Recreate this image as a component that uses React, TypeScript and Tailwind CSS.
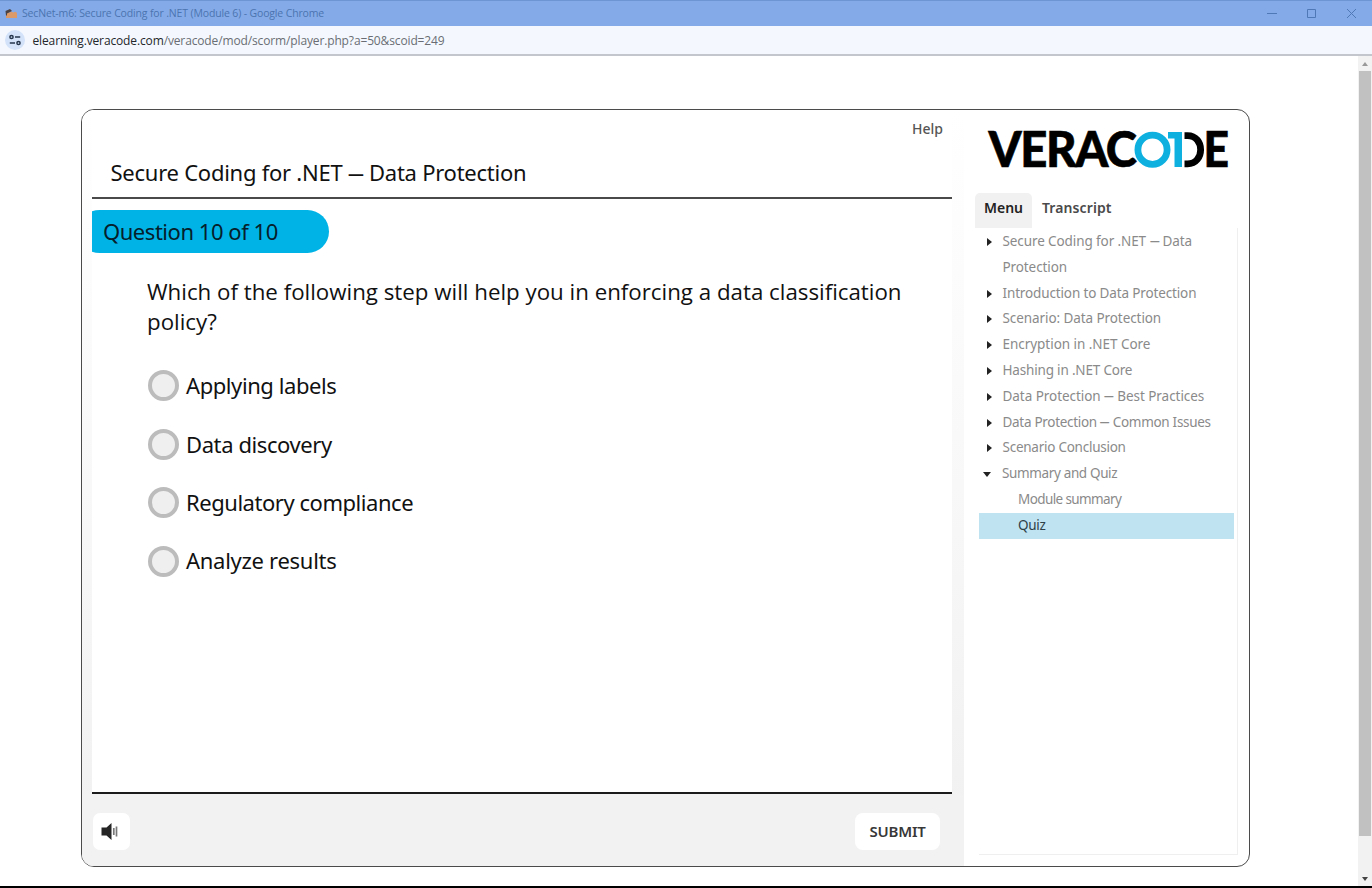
import { Fragment } from "react";

const answers = [
  { label: "Applying labels", cls: "mt-[33px] tracking-[-0.42px]" },
  { label: "Data discovery", cls: "mt-[27px] tracking-[-0.4px]" },
  { label: "Regulatory compliance", cls: "mt-[26.5px] tracking-[-0.46px]" },
  { label: "Analyze results", cls: "mt-[27px] tracking-[-0.28px]" },
];

const topics = [
  { label: "Secure Coding for .NET — Data Protection", cls: "tracking-[-0.1px]" },
  { label: "Introduction to Data Protection", cls: "tracking-[-0.14px]" },
  { label: "Scenario: Data Protection", cls: "tracking-[-0.08px]" },
  { label: "Encryption in .NET Core", cls: "tracking-[-0.04px]" },
  { label: "Hashing in .NET Core", cls: "tracking-[-0.18px]" },
  { label: "Data Protection — Best Practices", cls: "tracking-[-0.05px]" },
  { label: "Data Protection — Common Issues", cls: "tracking-[-0.3px]" },
  { label: "Scenario Conclusion", cls: "tracking-[-0.25px]" },
];

function Dashed({ text }: { text: string }) {
  return (
    <>
      {text.split("—").map((part, i) => (
        <Fragment key={i}>
          {i > 0 && <span className="-mx-[0.14em] inline-block scale-x-[.72] leading-none">—</span>}
          {part}
        </Fragment>
      ))}
    </>
  );
}

function Logo() {
  return (
    <svg
      className="ml-[25px] mt-[21px] block h-[38px] w-[240px] overflow-visible"
      viewBox="0 0 240 38"
      role="img"
      aria-label="Veracode"
    >
      <g
        fontFamily="Lato, 'Liberation Sans', sans-serif"
        fontWeight="900"
        fontSize="48.5"
        fill="#000"
        stroke="#000"
        strokeWidth="0.6"
      >
        <text x="-0.5" y="36" textLength="147" lengthAdjust="spacingAndGlyphs" letterSpacing="-1.5">
          VERAC
        </text>
        <text x="214.500" y="36" textLength="25.5" lengthAdjust="spacingAndGlyphs">E</text>
      </g>
      <circle cx="163.500" cy="18.700" r="14.600" fill="none" stroke="#0eb0e0" strokeWidth="6.800" />
      <path d="M179 1h14v35h-7.500v-28.500h-6.500z" fill="#0eb0e0" />
      <path d="M195.500 4.600h3c17.500 0 17.500 28.200 0 28.200h-3" fill="none" stroke="#000" strokeWidth="6.800" />
    </svg>
  );
}

export default function App() {
  return (
    <div className="flex h-[888px] w-[1372px] flex-col overflow-hidden bg-white font-['Noto_Sans',sans-serif]">
      <header className="flex h-[26px] shrink-0 items-center border-t border-[#6d94d3] bg-[#84abe8] font-['Open_Sans',sans-serif] text-[#4b74b0]">
        <svg className="ml-[5px] h-3 w-3" viewBox="0 0 12 12">
          <path d="M1 6c0-3 4-3 4 0v4H1zM4.500 6c0-3 4-3 4 0v4h-4zM8 6c0-3 4-3 4 0v4H8z" fill="#dc9a68" />
          <path d="M.5 3L5 1l2 2-5 2.500v2H1z" fill="#4a4243" />
        </svg>
        <span className="ml-[5px] whitespace-nowrap text-[10.5px] tracking-[-0.15px]">
          SecNet-m6: Secure Coding for .NET (Module 6) - Google Chrome
        </span>
        <svg className="mb-[1px] ml-auto mr-[15px] h-3 w-[92px]" viewBox="0 0 92 12" fill="none" stroke="#4f78b7" strokeWidth="1">
          <path d="M2 6.500h10M42.500 2.500h8v8h-8zM82 2l9 9M91 2l-9 9" />
        </svg>
      </header>

      <div className="flex h-[30px] shrink-0 items-center border-b-2 border-[#c3c6cc] bg-[#f4f8fe]">
        <span className="ml-[5px] flex h-5 w-5 items-center justify-center rounded-full bg-[#d3e2f9]">
          <svg className="h-3 w-3" viewBox="0 0 12 12" fill="none" stroke="#25364c" strokeWidth="1.5">
            <circle cx="2.500" cy="3" r="1.600" />
            <path d="M6 3h5.200M.8 9h5.200" />
            <circle cx="9.500" cy="9" r="1.600" />
          </svg>
        </span>
        <span className="ml-[7.5px] mt-px whitespace-nowrap font-['Open_Sans',sans-serif] text-[12px] tracking-[-0.134px] text-[#6a6e74]">
          <span className="text-[#24272b]">elearning.veracode.com</span>
          /veracode/mod/scorm/player.php?a=50&amp;scoid=249
        </span>
      </div>

      <div className="flex min-h-0 flex-1">
        <main className="min-w-0 flex-1 pl-[81px] pt-[53px]">
          <div className="flex h-[758px] w-[1169px] overflow-hidden rounded-[13px] border border-[#4b4b4b] bg-white">
            <section className="flex w-[882px] shrink-0 flex-col bg-linear-to-b from-white via-[#f8f8f8] to-[#f0f0f0] pl-[10px]">
              <div className="flex h-[684px] w-[860px] flex-col overflow-hidden bg-white">
                <div className="flex h-[37px] shrink-0 items-center justify-end pr-[9px] text-[14px] font-medium text-[#555]">
                  Help
                </div>
                <h1 className="flex h-[50px] shrink-0 items-center pl-[18.5px] text-[22px] text-[#111]">
                  <span className="whitespace-nowrap tracking-[-0.25px]">
                    <Dashed text="Secure Coding for .NET — Data Protection" />
                  </span>
                </h1>
                <div className="h-[2px] shrink-0 bg-[#4a4a4a]" />
                <div className="-ml-[14px] mt-[11px] flex h-[43px] w-[251px] shrink-0 items-center rounded-full bg-[#00b3e6] pl-[25px] text-[22px] tracking-[-0.46px] text-[#06202b]">
                  Question 10 of 10
                </div>
                <p className="ml-[55px] mt-[24px] whitespace-nowrap font-['Open_Sans',sans-serif] text-[22.3px] leading-[30px] text-[#111]">
                  Which of the following step will help you in enforcing a data classification
                  <br />
                  policy?
                </p>
                <div className="ml-[56px] text-[22px] leading-[32px] text-[#111]">
                  {answers.map((a) => (
                    <label key={a.label} className={`flex h-[31.6px] items-center gap-[7px] ${a.cls}`}>
                      <span className="h-[31px] w-[31px] shrink-0 rounded-full border-4 border-[#bcbcbc] bg-[#efefef]" />
                      <span className="-mt-[1.5px]">{a.label}</span>
                    </label>
                  ))}
                </div>
                <div className="mt-auto h-[2px] shrink-0 bg-[#1b1b1b]" />
              </div>
              <div className="-ml-[10px] flex flex-1 items-center justify-between bg-[#f2f2f2] pl-[11px] pr-[24px] pt-[2px]">
                <button className="flex h-[37px] w-[37px] items-center justify-center rounded-[7px] bg-white">
                  <svg className="-ml-[4px] h-[17px] w-[17px]" viewBox="0 0 17 17">
                    <path d="M.5 4.500h5l5-4.500v17l-5-4.500h-5z" fill="#252525" />
                    <path d="M12.800 5v7M15.500 3.500v10" stroke="#777" strokeWidth="1.700" />
                  </svg>
                </button>
                <button className="flex h-[37px] w-[85px] items-center justify-center rounded-[8px] bg-white text-[15px] font-semibold tracking-[-0.2px] text-[#383838]">
                  SUBMIT
                </button>
              </div>
            </section>

            <aside className="flex flex-1 flex-col">
              <Logo />
              <nav className="ml-[11px] mt-[24px] flex h-[35px] text-[14px] font-semibold text-[#4a4a4a]">
                <span className="flex w-[57px] items-center justify-center rounded-t-[5px] bg-[#f1f1f1] pb-[6px] text-[#222]">
                  Menu
                </span>
                <span className="ml-[10px] flex items-center pb-[6px] tracking-[0.1px]">Transcript</span>
              </nav>
              <ul className="mb-[11px] ml-[15px] mr-[11px] flex-1 border-b border-r border-[#efefef] pr-[3px] pt-[1px] text-[13.5px] leading-[25.8px] text-[#8a8a8a]">
                {topics.map((t) => (
                  <li key={t.label} className="flex">
                    <span className="ml-[7.5px] mt-[9px] h-0 w-0 shrink-0 border-y-4 border-l-[5px] border-y-transparent border-l-[#222]" />
                    <span className={`ml-[11px] w-[212px] ${t.cls}`}>
                      <Dashed text={t.label} />
                    </span>
                  </li>
                ))}
                <li className="flex">
                  <span className="ml-[4px] mt-[11px] h-0 w-0 shrink-0 border-x-[4.5px] border-t-[5px] border-x-transparent border-t-[#222]" />
                  <span className="ml-[11px] tracking-[-0.36px]">Summary and Quiz</span>
                </li>
                <li className="pl-[39px] tracking-[-0.6px]">Module summary</li>
                <li className="bg-[#bfe3f1] pl-[39px] tracking-[-0.3px] text-[#2e4048]">Quiz</li>
              </ul>
            </aside>
          </div>
        </main>

        <div className="flex w-[14px] shrink-0 flex-col items-center bg-[#f2f2f2]">
          <span className="mt-[6px] h-0 w-0 border-x-[3.5px] border-b-4 border-x-transparent border-b-[#999]" />
          <span className="mt-[5px] h-[765px] w-3 bg-[#c1c1c1]" />
          <span className="mb-[5px] mt-auto h-0 w-0 border-x-[3.5px] border-t-4 border-x-transparent border-t-[#444]" />
        </div>
      </div>
      <div className="h-[2px] shrink-0 bg-black" />
    </div>
  );
}
